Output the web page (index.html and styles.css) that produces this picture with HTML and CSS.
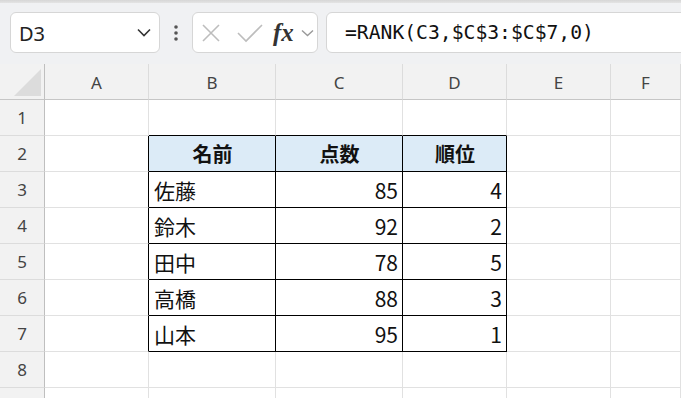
FILE: index.html
```html
<!DOCTYPE html>
<html lang="ja">
<head>
    <meta charset="UTF-8">
    <title>RANK</title>
    <link rel="stylesheet" href="styles.css">
</head>
<body>
    <div class="topbar"></div>
    <div class="toolbar">
        <div class="namebox">
            <span>D3</span>
            <svg width="14" height="9" viewBox="0 0 14 9"><path d="M1 1.5 L7 7.5 L13 1.5" fill="none" stroke="#333" stroke-width="1.6"/></svg>
        </div>
        <div class="grip">
            <svg width="6" height="16" viewBox="0 0 6 16"><circle cx="3" cy="2" r="1.8" fill="#555"/><circle cx="3" cy="8" r="1.8" fill="#555"/><circle cx="3" cy="14" r="1.8" fill="#555"/></svg>
        </div>
        <div class="fxbox">
            <svg width="20" height="20" viewBox="0 0 20 20"><path d="M2 2 L18 18 M18 2 L2 18" stroke="#bdbdbd" stroke-width="1.6"/></svg>
            <svg width="26" height="20" viewBox="0 0 26 20"><path d="M1 10 L9 18 L25 2" fill="none" stroke="#bdbdbd" stroke-width="1.6"/></svg>
            <span class="fx">fx</span>
            <svg width="13" height="8" viewBox="0 0 13 8"><path d="M1 1.5 L6.5 6.5 L12 1.5" fill="none" stroke="#999" stroke-width="1.4"/></svg>
        </div>
        <div class="formula">=RANK(C3,$C$3:$C$7,0)</div>
    </div>

    <div class="sheet">
        <div class="corner"><span class="tri"></span></div>
        <div class="ch">A</div><div class="ch">B</div><div class="ch">C</div><div class="ch">D</div><div class="ch">E</div><div class="ch">F</div>

        <div class="rh">1</div><div class="c"></div><div class="c bt"></div><div class="c bt"></div><div class="c bt"></div><div class="c"></div><div class="c"></div>

        <div class="rh">2</div><div class="c bl"></div>
        <div class="c tb th">名前</div><div class="c tb th">点数</div><div class="c tb th">順位</div>
        <div class="c"></div><div class="c"></div>

        <div class="rh">3</div><div class="c bl"></div>
        <div class="c tb">佐藤</div><div class="c tb num">85</div><div class="c tb num">4</div>
        <div class="c"></div><div class="c"></div>

        <div class="rh">4</div><div class="c bl"></div>
        <div class="c tb">鈴木</div><div class="c tb num">92</div><div class="c tb num">2</div>
        <div class="c"></div><div class="c"></div>

        <div class="rh">5</div><div class="c bl"></div>
        <div class="c tb">田中</div><div class="c tb num">78</div><div class="c tb num">5</div>
        <div class="c"></div><div class="c"></div>

        <div class="rh">6</div><div class="c bl"></div>
        <div class="c tb">高橋</div><div class="c tb num">88</div><div class="c tb num">3</div>
        <div class="c"></div><div class="c"></div>

        <div class="rh">7</div><div class="c bl"></div>
        <div class="c tb">山本</div><div class="c tb num">95</div><div class="c tb num">1</div>
        <div class="c"></div><div class="c"></div>

        <div class="rh">8</div><div class="c"></div><div class="c"></div><div class="c"></div><div class="c"></div><div class="c"></div><div class="c"></div>
        <div class="rh"></div><div class="c"></div><div class="c"></div><div class="c"></div><div class="c"></div><div class="c"></div><div class="c"></div>
    </div>
</body>
</html>
```

FILE: styles.css
```css
body {
    margin: 0;
    width: 681px;
    height: 398px;
    overflow: hidden;
    background: #fff;
    font-family: "Noto Sans", "Noto Sans CJK JP", sans-serif;
}
.topbar {
    height: 3px;
    background: linear-gradient(#d6d6d6, #e4e4e4);
}
.toolbar {
    height: 61px;
    box-sizing: border-box;
    padding-top: 9px;
    background: #f0f1f3;
    display: flex;
    align-items: flex-start;
}
.namebox, .fxbox, .formula {
    height: 41px;
    box-sizing: border-box;
    background: #fff;
    border: 1px solid #d6d6d6;
    border-radius: 6px;
    display: flex;
    align-items: center;
}
.namebox {
    margin-left: 10px;
    width: 150px;
    padding: 0 8px 0 8px;
    justify-content: space-between;
    font-size: 20px;
    color: #222;
}
.namebox span {
    padding-top: 2px;
}
.grip {
    width: 32px;
    height: 41px;
    display: flex;
    align-items: center;
    justify-content: center;
}
.fxbox {
    width: 126px;
    padding-left: 8px;
}
.fxbox svg:first-child {
    margin-right: 16px;
}
.fx {
    font-family: "Liberation Serif", serif;
    font-style: italic;
    font-weight: bold;
    font-size: 25px;
    color: #333;
    margin: 0 7px 0 10px;
}
.formula {
    margin-left: 8px;
    flex: 1;
    margin-right: -20px;
    border-radius: 6px 0 0 6px;
    padding-left: 18px;
    font-family: "DejaVu Sans Mono", monospace;
    font-size: 19.7px;
    color: #111;
}
.sheet {
    display: grid;
    grid-template-columns: 45px 104px 127px 127px 104px 104px 1fr;
    grid-template-rows: repeat(10, 36px);
}
.corner {
    background: #f2f2f2;
    border-right: 1px solid #bfbfbf;
    border-bottom: 1px solid #c6c6c6;
    position: relative;
}
.tri {
    position: absolute;
    right: 3px;
    bottom: 3px;
    width: 0;
    height: 0;
    border-left: 27px solid transparent;
    border-bottom: 27px solid #dcdcdc;
}
.ch {
    background: #f2f2f2;
    border-right: 1px solid #dcdcdc;
    border-bottom: 1px solid #c6c6c6;
    display: flex;
    align-items: center;
    justify-content: center;
    font-size: 17px;
    color: #444;
    padding-top: 2px;
    box-sizing: border-box;
}
.rh {
    background: #f2f2f2;
    border-right: 1px solid #bfbfbf;
    border-bottom: 1px solid #dcdcdc;
    display: flex;
    align-items: center;
    justify-content: center;
    font-size: 17px;
    color: #444;
}
.c {
    border-right: 1px solid #e1e1e1;
    border-bottom: 1px solid #e1e1e1;
    display: flex;
    align-items: center;
    padding: 0 4px 0 5px;
    font-family: "Noto Sans CJK JP", sans-serif;
    font-size: 21px;
    color: #111;
    box-sizing: border-box;
    min-width: 0;
}
.bl {
    border-right-color: #000;
}
.bt {
    border-bottom-color: #000;
}
.tb {
    border-right-color: #000;
    border-bottom-color: #000;
}
.th {
    background: #dcebf7;
    justify-content: center;
    font-weight: bold;
    font-size: 20px;
}
.num {
    justify-content: flex-end;
}
```
